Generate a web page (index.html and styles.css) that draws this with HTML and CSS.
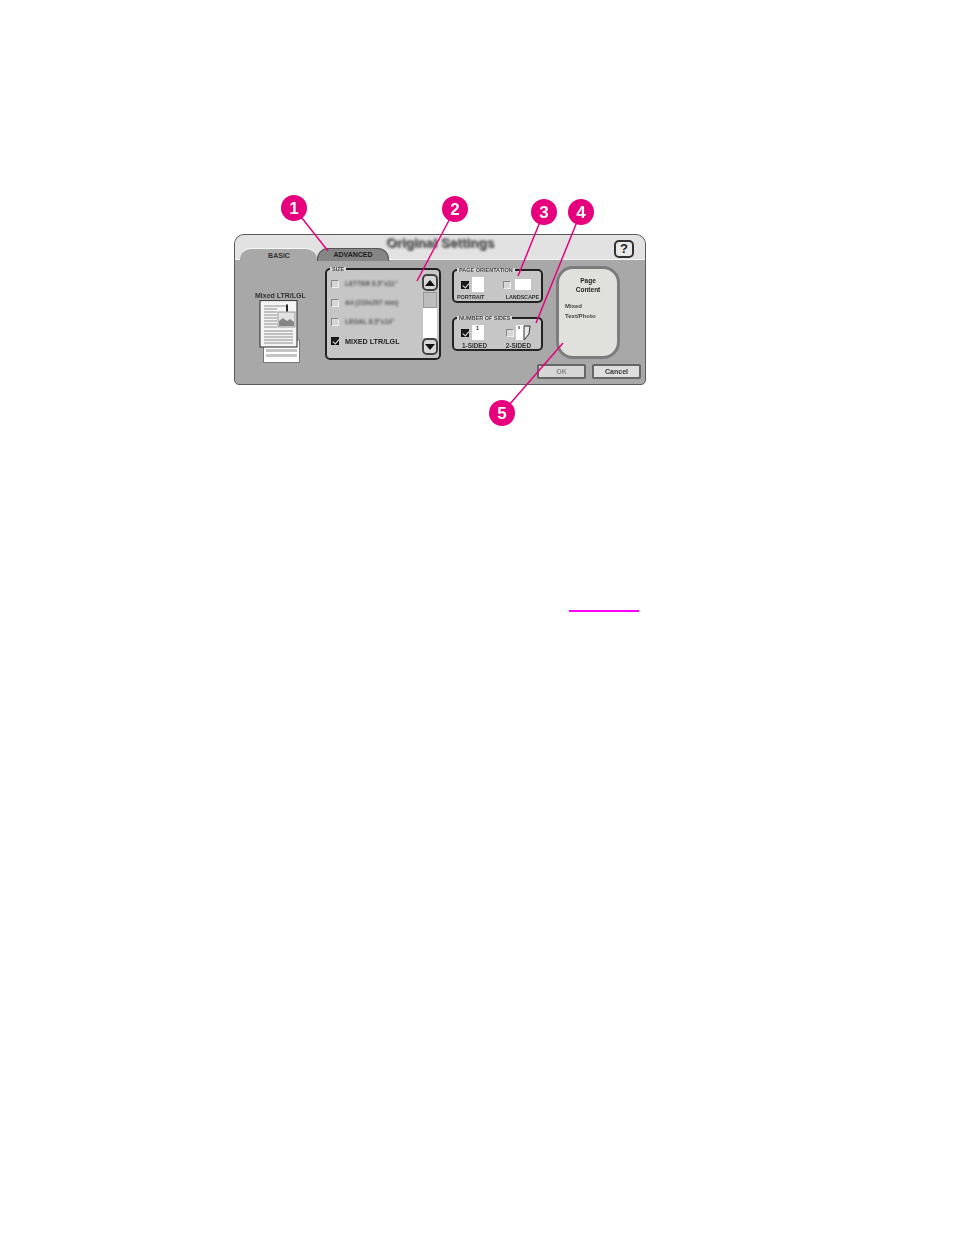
FILE: index.html
```html
<!DOCTYPE html>
<html lang="en">
<head>
<meta charset="utf-8">
<title>Original Settings</title>
<link rel="stylesheet" href="styles.css">
</head>
<body>
<main class="page">
  <div class="figure">
    <section class="panel">
      <header class="head">
        <div class="tab tab-basic">BASIC</div>
        <div class="tab tab-adv">ADVANCED</div>
        <h1 class="title">Original Settings</h1>
        <div class="help">?</div>
      </header>
      <div class="body">
        <div class="main">
          <div class="preview">
            <div class="preview-label">Mixed LTR/LGL</div>
            <svg class="doc" width="42" height="64" viewBox="0 0 42 64">
              <rect x="4.5" y="40" width="36" height="22.5" fill="#fff" stroke="#777"/>
              <rect x="7" y="49" width="31" height="3" fill="#c4c4c4"/>
              <rect x="7" y="54" width="31" height="3" fill="#c4c4c4"/>
              <rect x="1" y="0.5" width="37" height="46.5" fill="#f4f4f4" stroke="#444" stroke-width="1.2"/>
              <g stroke="#8e8e8e"><path d="M5 6h24M5 9h13M5 12h13M5 15h13M5 18h13M5 21h13M5 24h13M5 27h13M5 31h29M5 34h29M5 37h29M5 40h29M5 43h29"/></g>
              <rect x="19" y="12" width="17" height="15" fill="#e2e2e2" stroke="#999"/>
              <path d="M20 26v-5l4-3 4 3 3-2 4 3v4z" fill="#868686"/>
              <path d="M28 4.5v7" stroke="#222" stroke-width="2"/>
            </svg>
          </div>
          <fieldset class="box size">
            <legend class="legend">SIZE</legend>
            <div class="size-inner">
              <ul class="opts">
                <li class="opt"><span class="check"></span><span class="opt-text">LETTER 8.5"x11"</span></li>
                <li class="opt"><span class="check"></span><span class="opt-text">A4 (210x297 mm)</span></li>
                <li class="opt"><span class="check"></span><span class="opt-text">LEGAL 8.5"x14"</span></li>
                <li class="opt"><span class="check on"></span><span class="opt-text">MIXED LTR/LGL</span></li>
              </ul>
              <div class="scroll">
                <div class="arrow"><svg width="10" height="6" viewBox="0 0 10 6"><path d="M5 0l5 6H0z" fill="#111"/></svg></div>
                <div class="thumb"></div>
                <div class="track"></div>
                <div class="arrow"><svg width="10" height="6" viewBox="0 0 10 6"><path d="M5 6L0 0h10z" fill="#111"/></svg></div>
              </div>
            </div>
          </fieldset>
          <div class="stack">
            <fieldset class="box small">
              <legend class="legend">PAGE ORIENTATION</legend>
              <div class="pair">
                <div class="choice first">
                  <span class="check on"></span><span class="sheet tall"></span>
                </div>
                <div class="choice">
                  <span class="check"></span><span class="sheet wide"></span>
                </div>
              </div>
              <div class="caps caps-tight"><span>PORTRAIT</span><span>LANDSCAPE</span></div>
            </fieldset>
            <fieldset class="box small">
              <legend class="legend">NUMBER OF SIDES</legend>
              <div class="pair">
                <div class="choice first">
                  <span class="check on"></span><span class="sheet tall num">1</span>
                </div>
                <div class="choice second">
                  <span class="check"></span>
                  <svg class="duplex" width="15" height="16" viewBox="0 0 15 16"><path d="M0 0h8v15H0z" fill="#fff"/><path d="M8 1h6l-1 8-5 6z" fill="#e8e8e8" stroke="#333"/><path d="M3 1v3" stroke="#222"/></svg>
                </div>
              </div>
              <div class="caps"><span>1-SIDED</span><span>2-SIDED</span></div>
            </fieldset>
          </div>
          <aside class="content">
            <div class="content-head">Page<br>Content</div>
            <div class="content-val">Mixed<br>Text/Photo</div>
          </aside>
        </div>
        <div class="actions">
          <div class="btn btn-off">OK</div>
          <div class="btn">Cancel</div>
        </div>
      </div>
    </section>
    <svg class="callouts" width="954" height="460" viewBox="0 0 954 460">
      <g class="leaders">
        <path d="M294 208L328 251"/>
        <path d="M455 209L417 281"/>
        <path d="M544 212L518 276"/>
        <path d="M581 212L536 323"/>
        <path d="M502 413L563 343"/>
      </g>
      <g class="dots">
        <circle cx="294" cy="208" r="13"/>
        <circle cx="455" cy="209" r="13"/>
        <circle cx="544" cy="212" r="13"/>
        <circle cx="581" cy="212" r="13"/>
        <circle cx="502" cy="413" r="13"/>
      </g>
      <g class="nums">
        <text x="294" y="214">1</text>
        <text x="455" y="215">2</text>
        <text x="544" y="218">3</text>
        <text x="581" y="218">4</text>
        <text x="502" y="419">5</text>
      </g>
    </svg>
  </div>
  <div class="rule-row"><span class="link-rule"></span></div>
</main>
</body>
</html>
```
FILE: styles.css
```css
* { box-sizing: border-box; }
html, body { margin: 0; padding: 0; background: #fff; }
body { width: 954px; height: 1235px; overflow: hidden; font-family: "Liberation Sans", Arial, sans-serif; }

.page { display: flow-root; }
.figure { position: relative; padding: 234px 0 0 234px; height: 460px; }

.panel {
  width: 412px; height: 151px;
  display: flex; flex-direction: column;
  background: #a8a8a8;
  border: 1px solid #5a5a5a;
  border-radius: 10px 10px 5px 5px;
  overflow: hidden;
  color: #222;
  filter: blur(0.45px);
}

.head {
  height: 26px; flex: none;
  display: flex; align-items: flex-end;
  padding-left: 5px;
  background: linear-gradient(#e2e2e2 0, #e2e2e2 24px, #f2f2f2 24px, #f2f2f2 25px, #a8a8a8 25px);
}
.tab {
  height: 13px; font-size: 7px; font-weight: bold; text-align: center; line-height: 13px;
  border-radius: 11px 11px 0 0;
}
.tab-basic { width: 77px; background: #a8a8a8; color: #333; border-top: 1px solid #f6f6f6; line-height: 13px; padding-left: 1px; }
.tab-adv { width: 72px; background: #858585; color: #222; border: 1px solid #555; border-bottom: 0; margin-left: 0; line-height: 11px; }
.title {
  margin: 0 0 0 -3px; align-self: flex-start; padding-top: 1px;
  font-size: 13.5px; line-height: 14px; font-weight: bold; color: #777;
  text-shadow: 1px 1px 0 #444;
  white-space: nowrap; filter: blur(0.8px);
}
.help {
  width: 20px; height: 18px; margin: 0 11px 3px auto; align-self: flex-end;
  border: 2px solid #333; border-radius: 5px; background: #e8e8e8;
  font-size: 13px; font-weight: bold; line-height: 14px; text-align: center; color: #222;
}

.body { flex: 1; display: flex; flex-direction: column; padding-top: 6px; }
.main { display: flex; height: 94px; flex: none; }

.preview { width: 90px; flex: none; padding-top: 25px; }
.preview-label { font-size: 7px; font-weight: bold; line-height: 8px; white-space: nowrap; margin-left: 20px; color: #333; filter: blur(0.7px); }
.doc { display: block; margin: 0 0 0 24px; }

.box {
  margin: 0; padding: 0; min-width: 0;
  border: 2px solid #222; border-radius: 5px;
  background: #c6c6c6;
}
.legend {
  margin: 0 0 0 3px; padding: 0 2px;
  font-size: 5.5px; line-height: 4px; font-weight: bold; color: #444;
  white-space: nowrap; background: #d8d8d8; filter: blur(0.6px);
}
.size { width: 116px; height: 93px; }
.size-inner { display: flex; height: 100%; padding: 3px 1px 3px 4px; }
.opts { list-style: none; margin: 0; padding: 0; flex: 1; }
.opt { display: flex; align-items: center; height: 19.2px; gap: 6px; }
.opt-text { font-size: 6.5px; font-weight: bold; color: #555; white-space: nowrap; filter: blur(0.8px); }
.opt:last-child .opt-text { color: #222; font-size: 7.2px; filter: blur(0.6px); }

.check {
  position: relative; display: inline-block; flex: none; width: 8px; height: 8px;
  background: #d6d6d6; border: 1px solid #888; border-right-color: #eee; border-bottom-color: #eee;
}
.check.on { background: #1c1c1c; border-color: #111; }
.check.on::after {
  content: ""; position: absolute; left: 1.5px; top: 0; width: 3px; height: 4.5px;
  border: solid #e8e8e8; border-width: 0 1px 1px 0; transform: rotate(40deg);
}

.scroll { width: 16px; flex: none; display: flex; flex-direction: column; }
.arrow {
  height: 17px; flex: none; display: flex; align-items: center; justify-content: center;
  background: #d8d8d8; border: 2px solid #444; border-radius: 5px;
}
.thumb { height: 16px; flex: none; margin: 1px 1px 0; background: #bdbdbd; border: 1px solid #999; }
.track { flex: 1; margin: 0 1px; background: #fff; }

.stack { width: 91px; margin-left: 11px; flex: none; display: flex; flex-direction: column; gap: 13px; padding-top: 1px; }
.small { height: 35px; }
.pair { display: flex; height: 20px; padding: 5px 0 0 7px; }
.choice { display: flex; align-items: center; width: 30px; }
.first { width: 42px; gap: 3px; }
.second { padding-left: 3px; gap: 2px; }
.sheet { display: block; background: #fff; flex: none; }
.tall { width: 12px; height: 15px; }
.wide { width: 16px; height: 11px; margin-left: 4px; }
.num { font-size: 5px; line-height: 6px; font-weight: bold; padding-left: 4px; }
.duplex { display: block; flex: none; }
.caps {
  display: flex; justify-content: space-between; padding: 2px 10px 0 8px;
  font-size: 6.4px; line-height: 7px; font-weight: bold; color: #333; white-space: nowrap;
  filter: blur(0.6px);
}
.caps-tight { font-size: 5.5px; letter-spacing: -0.1px; padding: 2px 2px 0 3px; }

.content {
  width: 64px; height: 93px; margin: -1px 0 0 13px; flex: none;
  border: 3px solid #7c7c7c; border-radius: 17px;
  background: #e0e0dc;
  padding: 7px 0 0 6px;
  font-size: 6.5px; color: #222;
}
.content-head { text-align: center; margin-right: 6px; font-weight: bold; line-height: 9px; filter: blur(0.4px); }
.content-val { margin-top: 7px; line-height: 10px; font-weight: bold; color: #444; font-size: 6px; filter: blur(0.4px); }

.actions { display: flex; justify-content: flex-end; gap: 6px; padding: 3px 4px 0 0; }
.btn {
  width: 49px; height: 15px;
  border: 2px solid #666; border-radius: 2px; background: #dedede;
  font-size: 7px; font-weight: bold; line-height: 11px; text-align: center; color: #333;
  filter: blur(0.4px);
}
.btn-off { color: #888; background: #d6d6d6; }

.callouts { position: absolute; left: 0; top: 0; pointer-events: none; }
.leaders path { stroke: #e6007e; stroke-width: 1.5; fill: none; }
.dots circle { fill: #e6007e; }
.nums text { fill: #fff; font-family: "Liberation Sans", Arial, sans-serif; font-weight: bold; font-size: 17px; text-anchor: middle; }

.rule-row { padding: 150px 0 0 569px; }
.link-rule { display: block; width: 70px; height: 1.5px; background: #ff00ff; }
```
